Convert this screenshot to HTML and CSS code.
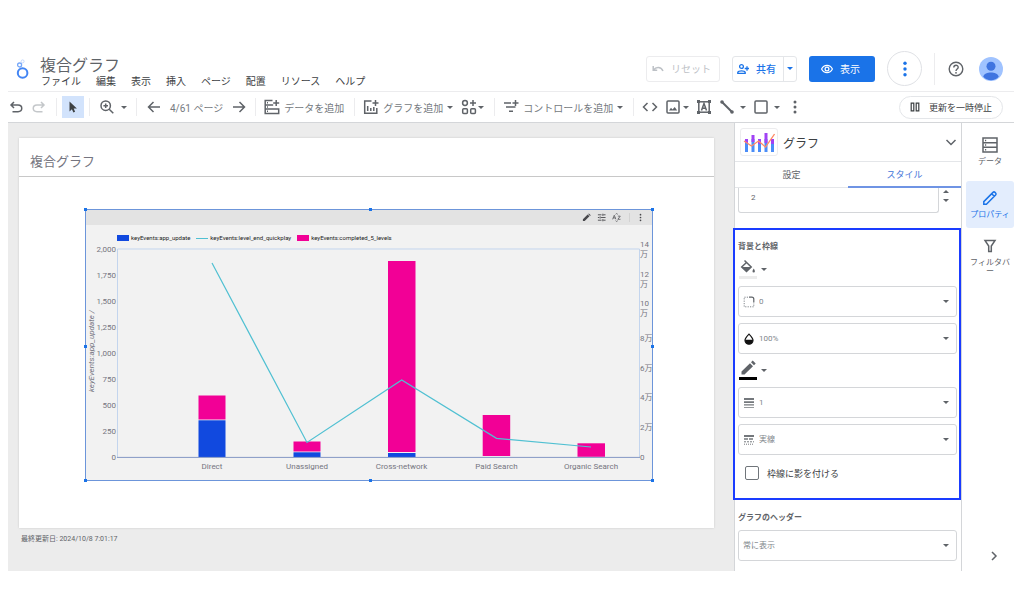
FILE: index.html
```html
<!DOCTYPE html>
<html lang="ja">
<head>
<meta charset="utf-8">
<title>複合グラフ</title>
<link rel="stylesheet" href="styles.css">
</head>
<body>
<svg class="defs" aria-hidden="true">
  <symbol id="caret" viewBox="0 0 6 3"><path d="M0 0h6L3 3z" fill="currentColor"/></symbol>
  <symbol id="dots" viewBox="0 0 16 16"><g fill="currentColor"><circle cx="8" cy="3" r="1.5"/><circle cx="8" cy="8" r="1.5"/><circle cx="8" cy="13" r="1.5"/></g></symbol>
</svg>

<header class="header">
  <svg class="logo" viewBox="0 0 14 20" aria-hidden="true"><g fill="none" stroke="#4285f4"><circle cx="7.6" cy="14" r="4.8" stroke-width="2"/><circle cx="4.6" cy="6" r="2" stroke-width="1.3" stroke="#76a7f8"/><circle cx="7.6" cy="2.4" r="1.5" stroke-width=".9" stroke="#bcd3fb"/></g></svg>
  <div class="heading">
    <h1 class="doc-title">複合グラフ</h1>
    <nav class="menu">
      <button>ファイル</button><button>編集</button><button>表示</button><button>挿入</button><button>ページ</button><button>配置</button><button>リソース</button><button>ヘルプ</button>
    </nav>
  </div>
  <div class="actions">
    <button class="btn btn-reset" disabled>
      <svg class="icon-s" viewBox="0 0 12 12"><path d="M1.2 3v4.200h4M1.500 7C4 3.700 8.800 3.500 11 8" fill="none" stroke="currentColor" stroke-width="1.5"/></svg>リセット
    </button>
    <div class="split">
      <button class="btn-share">
        <svg class="icon-s" viewBox="0 0 12 12"><g fill="none" stroke="currentColor" stroke-width="1.3"><circle cx="4.500" cy="3.500" r="1.900"/><path d="M.8 10.300V9.200C1.500 7.500 7.500 7.500 8.200 9.200v1.100zM10 3.200v4.600M7.700 5.500h4.300"/></g></svg>共有
      </button>
      <button class="btn-more" aria-label="共有メニュー"><svg class="caret"><use href="#caret"/></svg></button>
    </div>
    <button class="btn btn-view">
      <svg class="icon-s" viewBox="0 0 12 12"><g fill="none" stroke="currentColor" stroke-width="1.200"><path d="M.6 6C3 1.200 9 1.200 11.400 6 9 10.800 3 10.800.6 6z"/><circle cx="6" cy="6" r="1.900"/></g></svg>表示
    </button>
    <button class="round" aria-label="その他"><svg class="icon" viewBox="1 1 14 14"><use href="#dots" width="16" height="16"/></svg></button>
    <div class="account">
      <button class="plain" aria-label="ヘルプ"><svg class="icon" viewBox="0 0 16 16"><circle cx="8" cy="8" r="6.800" fill="none" stroke="currentColor" stroke-width="1.400"/><path d="M5.800 6.500c0-3 4.400-2.900 4.400-.2C10.200 8 8 8 8 9.900" fill="none" stroke="currentColor" stroke-width="1.400"/><circle cx="8" cy="11.800" r=".9" fill="currentColor"/></svg></button>
      <button class="plain" aria-label="アカウント"><svg class="avatar" viewBox="0 0 24 24"><circle cx="12" cy="12" r="12" fill="#a0c3ff"/><circle cx="12" cy="9.300" r="4.500" fill="#3f74e0"/><path d="M4.200 19.500c1.500-5.500 14-5.500 15.600 0-3.500 5-12 5-15.600 0z" fill="#3f74e0"/></svg></button>
    </div>
  </div>
</header>

<div class="toolbar" role="toolbar">
  <div class="group history">
    <button class="plain" aria-label="元に戻す"><svg class="icon" viewBox="0 0 16 16"><path d="M6 3 3 6l3 3M3.300 6H10c5 0 5 6.700 0 6.700H4.500" class="stroke"/></svg></button>
    <button class="plain faint" aria-label="やり直し"><svg class="icon" viewBox="0 0 16 16"><path d="m10 3 3 3-3 3M12.700 6H6C1 6 1 12.700 6 12.700h5.500" class="stroke"/></svg></button>
  </div>
  <div class="group pointer">
    <button class="plain selected" aria-label="選択"><svg class="icon" viewBox="0 0 16 16"><path d="M4.500 2.500v10l2.400-2.200 1.500 3.200 1.700-.8-1.400-3.100h3.200z" fill="currentColor"/></svg></button>
  </div>
  <div class="group zoom">
    <button class="plain" aria-label="ズーム"><svg class="icon" viewBox="0 0 16 16"><path d="M10.200 10.200 14.300 14.300M6.700 4.400v4.600M4.400 6.700H9" class="stroke"/><circle cx="6.700" cy="6.700" r="4.700" class="stroke"/></svg></button>
    <svg class="caret"><use href="#caret"/></svg>
  </div>
  <div class="group pager">
    <button class="plain" aria-label="前のページ"><svg class="icon" viewBox="0 0 16 16"><path d="M7.500 3 2.500 8l5 5M3 8h11" class="stroke"/></svg></button>
    <span class="tool-text">4/61 ページ</span>
    <button class="plain" aria-label="次のページ"><svg class="icon" viewBox="0 0 16 16"><path d="m8.500 3 5 5-5 5M13 8H2" class="stroke"/></svg></button>
  </div>
  <div class="group">
    <button class="tool"><svg class="icon" viewBox="0 0 16 16"><path d="M8.500 1.500H1.200v13h13.500V10H1.200M1.200 6h8M12.200 1v6M9.200 4h6M1.200 10v4.500" class="stroke"/><path d="M3 3.700h1M3 8h1M3 12.300h1" class="stroke"/></svg><span class="tool-text">データを追加</span></button>
  </div>
  <div class="group">
    <button class="tool"><svg class="icon" viewBox="0 0 16 16"><path d="M8.500 2H1.700v12.300h12.100V9M12.500 1v6M9.500 4h6M4.700 7v5M7.800 9v3M10.800 8v4" class="stroke"/></svg><span class="tool-text">グラフを追加</span><svg class="caret"><use href="#caret"/></svg></button>
    <button class="tool blocks" aria-label="コミュニティ ビジュアリゼーション"><svg class="icon" viewBox="0 0 16 16"><path d="M12 1v6M9 4h6" class="stroke"/><circle cx="4" cy="4" r="2.400" class="stroke"/><rect x="1.700" y="9.700" width="4.700" height="4.700" rx="1" class="stroke"/><rect x="9.700" y="9.700" width="4.700" height="4.700" rx="1" class="stroke"/></svg><svg class="caret"><use href="#caret"/></svg></button>
  </div>
  <div class="group">
    <button class="tool"><svg class="icon" viewBox="0 0 16 16"><path d="M1 4h7M3 8h9.500M6 12.300h4M12.500 1v6M9.500 4h6" class="stroke"/></svg><span class="tool-text">コントロールを追加</span><svg class="caret"><use href="#caret"/></svg></button>
  </div>
  <div class="group insert">
    <button class="plain" aria-label="URL の埋め込み"><svg class="icon" viewBox="0 0 16 16"><path d="M5.500 4 1.500 8l4 4M10.500 4l4 4-4 4" class="stroke"/></svg></button>
    <button class="tool" aria-label="画像"><svg class="icon" viewBox="0 0 16 16"><rect x="2" y="2" width="12" height="12" rx="1" class="stroke"/><path d="m4 11.500 2-2.700 1.500 1.700L9.700 8l2.500 3.500z" fill="currentColor"/></svg><svg class="caret"><use href="#caret"/></svg></button>
    <button class="plain" aria-label="テキスト"><svg class="icon" viewBox="0 0 16 16"><rect x="2.800" y="2.800" width="10.400" height="10.400" class="stroke"/><path d="m5.500 11.500 2.500-7 2.500 7M6.300 9.300h3.400" class="stroke"/><path d="M1 1h3v3H1zM12 1h3v3h-3zM1 12h3v3H1zM12 12h3v3h-3z" fill="currentColor"/></svg></button>
    <button class="tool wide" aria-label="線"><svg class="icon" viewBox="0 0 16 16"><path d="m3 3 10 10" stroke="currentColor" stroke-width="2"/><circle cx="3" cy="3" r="1.800" fill="currentColor"/><circle cx="13" cy="13" r="1.800" fill="currentColor"/></svg><svg class="caret"><use href="#caret"/></svg></button>
    <button class="tool wide" aria-label="図形"><svg class="icon" viewBox="0 0 16 16"><rect x="2" y="2" width="12" height="12" rx="1" class="stroke"/></svg><svg class="caret"><use href="#caret"/></svg></button>
    <button class="plain" aria-label="その他"><svg class="icon" viewBox="0 0 16 16"><use href="#dots"/></svg></button>
  </div>
  <button class="pause"><svg class="icon-s" viewBox="0 0 12 12"><path d="M2.200 2.200h2.600v7.600H2.200zM7.200 2.200h2.600v7.600H7.200z" fill="none" stroke="currentColor" stroke-width="1.200"/></svg>更新を一時停止</button>
</div>

<main class="workspace">
  <section class="canvas">
    <article class="page">
      <h2 class="page-title">複合グラフ</h2>
      <div class="page-body">
        <div class="chart">
          <i class="handle tl"></i><i class="handle tc"></i><i class="handle tr"></i><i class="handle ml"></i><i class="handle mr"></i><i class="handle bl"></i><i class="handle bc"></i><i class="handle br"></i>
          <div class="chart-bar">
            <button class="plain" aria-label="編集"><svg class="icon-xs" viewBox="0 0 10 10"><path d="M1 9V7l5.300-5.300 2 2L3 9zM6.900 1.200l.8-.7 2 2-.8.700z" fill="currentColor"/></svg></button>
            <button class="plain" aria-label="調整"><svg class="icon-xs" viewBox="0 0 10 10"><path d="M1 2h4M7 2h2.500M6.500.8v2.400M1 5h1.500M4.500 5h5M3.500 3.800v2.400M1 8h4M7 8h2.500M6.500 6.800v2.400" stroke="currentColor" fill="none"/></svg></button>
            <button class="plain" aria-label="並べ替え"><svg class="icon-xs" viewBox="0 0 10 10"><path d="m.7 7 1.800-4.500L4.300 7M1.300 5.500h2.400M6.500 3.500h2.700L6.500 7h2.900M4 1.500 5.200.5l1.200 1M4 8.500l1.200 1 1.200-1" stroke="currentColor" stroke-width=".8" fill="none"/></svg></button>
            <button class="plain more" aria-label="その他"><svg class="icon-xs" viewBox="0 0 16 16"><use href="#dots"/></svg></button>
          </div>
          <ul class="legend">
            <li><i class="key key-blue"></i>keyEvents:app_update</li>
            <li><i class="key key-line"></i>keyEvents:level_end_quickplay</li>
            <li><i class="key key-pink"></i>keyEvents:completed_5_levels</li>
          </ul>
          <svg class="plot" viewBox="86 237 566 243" role="img" aria-label="複合グラフ">
            <path d="M117.500 457V249H639.500V457" fill="none" stroke="#c3d5ee"/>
            <g fill="#f20096">
              <rect x="198.500" y="395.500" width="27" height="24"/><rect x="293.500" y="441.500" width="27" height="10"/><rect x="388" y="261" width="27.500" height="191"/><rect x="482.700" y="415" width="27.500" height="41"/><rect x="577.500" y="443.300" width="27.500" height="13.500"/>
            </g>
            <g fill="#1149df">
              <rect x="198.500" y="420.300" width="27" height="36.700"/><rect x="293.500" y="452.300" width="27" height="4.700"/><rect x="388" y="453" width="27.500" height="4"/>
            </g>
            <path d="M117 457.400H640" stroke="#8498c4"/>
            <path d="m212 263 95 179.500 94.700-62.500 94.800 58.300 94.500 8.700" fill="none" stroke="#50c0d2" stroke-width="1.200"/>
            <g class="axis" text-anchor="end">
              <text x="116" y="252">2,000</text><text x="116" y="278">1,750</text><text x="116" y="304">1,500</text><text x="116" y="330">1,250</text><text x="116" y="356">1,000</text><text x="116" y="382">750</text><text x="116" y="408">500</text><text x="116" y="434">250</text><text x="116" y="460">0</text>
            </g>
            <g class="axis">
              <text x="640" y="247">14</text><text x="640" y="257">万</text><text x="640" y="277">12</text><text x="640" y="287">万</text><text x="640" y="306">10</text><text x="640" y="316">万</text><text x="640" y="341">8万</text><text x="640" y="371">6万</text><text x="640" y="400">4万</text><text x="640" y="430">2万</text><text x="640" y="460">0</text>
            </g>
            <g class="axis" text-anchor="middle">
              <text x="212" y="469">Direct</text><text x="307" y="469">Unassigned</text><text x="401.500" y="469">Cross-network</text><text x="496.500" y="469">Paid Search</text><text x="591" y="469">Organic Search</text>
            </g>
            <text class="axis axis-title" transform="translate(94 392) rotate(-90)">keyEvents:app_update /</text>
          </svg>
        </div>
      </div>
    </article>
    <p class="updated">最終更新日: 2024/10/8 7:01:17</p>
  </section>

  <aside class="panel">
    <div class="panel-head">
      <span class="tile"><svg viewBox="0 0 32 22"><g fill="#4a8df8"><path d="M2 11h3v10H2zM8.500 8h3v13h-3zM15 12h3v9h-3zM21.500 8h3v13h-3zM28 10h3v11h-3z"/></g><g fill="#a142f4"><path d="M2 8h3v4H2zM8.500 4h3v7h-3zM15 8h3v5h-3zM21.500 2h3v10h-3zM28 8h3v5h-3z"/></g><path d="m1 10 7.500 5 7-5 7 6L31.500 3" fill="none" stroke="#ff8a65" stroke-width="1.300"/></svg></span>
      <h2>グラフ</h2>
      <button class="plain" aria-label="閉じる"><svg class="icon-s" viewBox="0 0 12 12"><path d="m1.500 4 4.500 4.500L10.500 4" class="stroke"/></svg></button>
    </div>
    <div class="tabs" role="tablist">
      <button role="tab">設定</button><button role="tab" class="active" aria-selected="true">スタイル</button>
    </div>
    <div class="stepper">
      <input type="text" value="2" aria-label="桁数">
      <span class="spin"><button class="plain" aria-label="増やす"><svg class="caret up"><use href="#caret"/></svg></button><button class="plain" aria-label="減らす"><svg class="caret"><use href="#caret"/></svg></button></span>
    </div>
    <section class="highlight">
      <h3>背景と枠線</h3>
      <button class="color" aria-label="背景色"><span class="ink ink-fill"><svg class="icon" viewBox="0 0 16 16"><path d="M4.500 1.500 11.200 8 6.500 12.500 1.700 8 6.500 3.500" fill="none" stroke="currentColor" stroke-width="1.500"/><path d="M2 8h9l-4.500 4.500z" fill="currentColor"/><path d="M13.700 9.500c1.500 2 1.700 4 0 4s-1.500-2 0-4z" fill="currentColor"/></svg></span><svg class="caret"><use href="#caret"/></svg></button>
      <label class="select"><svg class="icon-s" viewBox="0 0 12 12"><path d="M6 1.200h2.800q2 0 2 2V6" fill="none" stroke="#5f6368" stroke-width="1.200"/><path d="M5 1.200H1.200v9.600h9.600V6" fill="none" stroke="#80868b" stroke-dasharray="1.200 1.200"/></svg><select aria-label="枠線の角丸"><option>0</option></select><svg class="caret"><use href="#caret"/></svg></label>
      <label class="select"><svg class="icon-s" viewBox="0 0 12 12"><path d="M6 1.200C3.500 3.800 2 5.500 2 7.200a4 4 0 0 0 8 0C10 5.500 8.500 3.800 6 1.200z" fill="none" stroke="#111" stroke-width="1.200"/><path d="M2 6.700h8c0 6-8 6-8 0z" fill="#111"/></svg><select aria-label="不透明度"><option>100%</option></select><svg class="caret"><use href="#caret"/></svg></label>
      <button class="color" aria-label="枠線の色"><span class="ink ink-line"><svg class="icon" viewBox="0 0 16 16"><path d="M1.500 14.500v-3L10 3.200l3 3-8.500 8.300zM11 2.200l1.700-1.700 3 3L14 5.200z" fill="currentColor"/></svg></span><svg class="caret"><use href="#caret"/></svg></button>
      <label class="select"><svg class="icon-s" viewBox="0 0 12 12"><path d="M1 1h10v2H1zM1 4.300h10v1.700H1zM1 7.300h10v1.200H1zM1 10h10v.7H1z" fill="#74787c"/></svg><select aria-label="枠線の太さ"><option>1</option></select><svg class="caret"><use href="#caret"/></svg></label>
      <label class="select"><svg class="icon-s" viewBox="0 0 12 12"><g stroke="#74787c"><path d="M1 2h10" stroke-width="2"/><path d="M1 5h10" stroke-width="1.500" stroke-dasharray="4 1"/><path d="M1 7.800h10" stroke-dasharray="2 1"/><path d="M1 10.200h10" stroke-dasharray="1 1"/></g></svg><select aria-label="枠線のスタイル"><option>実線</option></select><svg class="caret"><use href="#caret"/></svg></label>
      <label class="check"><input type="checkbox">枠線に影を付ける</label>
    </section>
    <section class="header-options">
      <h3>グラフのヘッダー</h3>
      <label class="select"><select aria-label="グラフのヘッダー"><option>常に表示</option></select><svg class="caret"><use href="#caret"/></svg></label>
    </section>
  </aside>

  <nav class="rail">
    <button class="rail-item"><svg class="icon" viewBox="0 0 16 16"><path d="M1 1h14v14H1zM1 5.700h14M1 10.300h14M3 3.400h1.200M3 8h1.200M3 12.700h1.200" class="stroke"/></svg>データ</button>
    <button class="rail-item current"><svg class="icon" viewBox="0 0 16 16"><path d="M1.800 14.200v-2.600L11 2.400q1-1 2 0l.6.6q1 1 0 2L4.400 14.200zM9.700 3.700l2.600 2.600" class="stroke"/></svg>プロパティ</button>
    <button class="rail-item"><svg class="icon" viewBox="0 0 16 16"><path d="M3 2.500h10L9.300 8v5.500H6.700V8z" class="stroke"/></svg><span>フィルタバー</span></button>
    <button class="plain expand" aria-label="折りたたむ"><svg class="icon-s" viewBox="0 0 12 12"><path d="m4 2 4 4-4 4" class="stroke"/></svg></button>
  </nav>
</main>
</body>
</html>
```
FILE: styles.css
```css
* { box-sizing: border-box; }

body {
  margin: 0;
  min-height: 100vh;
  padding: 46px 10px 43px 8px;
  display: flex;
  flex-direction: column;
  background: #fff;
  color: #5f6368;
  font-family: Roboto, "Noto Sans CJK JP", sans-serif;
  font-size: 10px;
}

h1, h2, h3, p, ul { margin: 0; padding: 0; font-weight: 400; }

button, input, select {
  font: inherit;
  color: inherit;
  border: 0;
  background: none;
  padding: 0;
  margin: 0;
  white-space: nowrap;
}

svg { display: block; flex: none; }
.defs { position: absolute; width: 0; height: 0; }
.stroke { fill: none; stroke: currentColor; stroke-width: 1.5; }
.icon { width: 16px; height: 16px; }
.icon-s { width: 12px; height: 12px; }
.icon-xs { width: 9px; height: 9px; }
.caret { width: 6px; height: 3px; }
.up { transform: rotate(180deg); }
.plain { display: flex; align-items: center; justify-content: center; }
.faint { color: #c4c7ca; }

/* Header */
.header {
  height: 46px;
  display: flex;
  align-items: center;
  border-bottom: 1px solid #ececee;
}
.logo { width: 14px; height: 20px; margin: 0 11px 0 7px; }
.heading { padding-top: 9px; }
.doc-title { font-size: 16px; line-height: 18px; }
.menu { display: flex; gap: 15px; padding-left: 1px; line-height: 14px; color: #3c4043; }
.actions { margin-left: auto; display: flex; align-items: center; gap: 12px; }
.btn {
  height: 26px;
  display: flex;
  align-items: center;
  border-radius: 3px;
}
.btn-reset { gap: 7px; padding: 0 8px 0 5px; color: #bdc1c6; border: 1px solid #ececee; }
.split {
  height: 26px;
  display: flex;
  border: 1px solid #e4e6e9;
  border-radius: 3px;
  color: #1a73e8;
  font-weight: 500;
}
.btn-share { display: flex; align-items: center; gap: 7px; padding: 0 7px 0 4px; border-right: 1px solid #e4e6e9; }
.btn-more { padding: 0 3px; }
.btn-view { gap: 7px; padding: 0 15px 0 12px; background: #1a73e8; color: #fff; }
.round {
  width: 35px;
  height: 35px;
  display: flex;
  align-items: center;
  justify-content: center;
  border: 1px solid #dfe1e5;
  border-radius: 50%;
  color: #1a73e8;
}
.account {
  height: 32px;
  display: flex;
  align-items: center;
  gap: 15px;
  padding: 0 11px 0 13px;
  border-left: 1px solid #ececee;
}
.avatar { width: 24px; height: 24px; }

/* Toolbar */
.toolbar {
  height: 31px;
  display: flex;
  align-items: center;
  border-bottom: 1px solid #d4d6d9;
}
.group {
  height: 18px;
  display: flex;
  align-items: center;
  padding: 0 10px 0 8px;
  border-right: 1px solid #ececee;
}
.history { gap: 7px; padding: 0 9px 0 0; }
.pointer { padding: 0 5px; }
.selected { width: 22px; height: 22px; background: #d2e3fc; color: #3c4043; }
.zoom { gap: 6px; padding: 0 9px 0 9px; }
.pager { gap: 8px; padding: 0 8px 0 9px; }
.tool { display: flex; align-items: center; gap: 4px; }
.tool-text { color: #757a80; }
.blocks { gap: 1px; margin-left: 8px; }
.insert { gap: 7px; border-right: 0; padding-right: 0; }
.insert .tool { gap: 2px; }
.insert .wide { gap: 5px; }
.pause {
  height: 23px;
  margin: 0 11px 0 auto;
  display: flex;
  align-items: center;
  gap: 8px;
  padding: 0 10px 0 9px;
  border: 1px solid #e4e6e9;
  border-radius: 12px;
  font-size: 9px;
  color: #3c4043;
}

/* Workspace */
.workspace { flex: 1; display: flex; }
.canvas { flex: 1; min-width: 0; padding: 15px 20px 0 11px; background: #ececec; }
.page { background: #fff; box-shadow: 0 0 2px #c8c8c8; }
.page-title {
  padding: 14px 11px 4px;
  font-size: 13px;
  line-height: 20px;
  color: #757580;
  border-bottom: 1px solid #c8c8c8;
}
.page-body { padding: 32px 61px 47px 66px; }
.updated { padding: 5px 2px; font-size: 7px; line-height: 12px; }

/* Chart */
.chart {
  position: relative;
  border: 1px solid #6c95da;
  background: #f2f2f2;
}
.handle { position: absolute; width: 3px; height: 3px; background: #1a73e8; }
.tl, .tc, .tr { top: -2px; }
.bl, .bc, .br { bottom: -2px; }
.ml, .mr { top: 50%; }
.tl, .ml, .bl { left: -2px; }
.tr, .mr, .br { right: -2px; }
.tc, .bc { left: 50%; }
.chart-bar {
  height: 15px;
  display: flex;
  align-items: center;
  justify-content: flex-end;
  gap: 6px;
  padding-right: 7px;
  background: #e3e3e3;
  color: #48484c;
}
.more { margin-left: 2px; padding-left: 6px; border-left: 1px solid #d2d2d2; }
.legend {
  display: flex;
  gap: 6px;
  margin-bottom: -5px;
  padding: 9px 31px 0;
  list-style: none;
  font-size: 6px;
  line-height: 8px;
  color: #222;
}
.legend li { display: flex; align-items: center; gap: 2px; }
.key { width: 12px; height: 6px; }
.key-blue { background: #1149df; }
.key-pink { background: #f20096; }
.key-line { height: 1px; background: #50c0d2; }
.plot { width: 100%; height: auto; }
.axis { font-size: 8px; fill: #757580; }
.axis-title { font-style: italic; }

/* Property panel */
.panel { width: 228px; border-left: 1px solid #d4d6d9; border-right: 1px solid #d4d6d9; }
.panel-head { height: 39px; display: flex; align-items: center; gap: 5px; padding: 0 4px 0 5px; border-bottom: 1px solid #e4e6e9; }
.panel-head h2 { flex: 1; font-size: 12px; color: #3c4043; }
.tile { border: 1px solid #ececee; border-radius: 3px; padding: 2px; }
.tile svg { width: 32px; height: 22px; }
.tabs { height: 26px; display: grid; grid-template-columns: 1fr 1fr; font-size: 9px; }
.tabs button { border-bottom: 1px solid #e4e6e9; }
.tabs .active { color: #3f74d8; border-bottom: 2px solid #6f94e4; }
.stepper { display: flex; padding: 0 12px 15px 3px; font-size: 8px; }
.stepper input {
  flex: 1;
  min-width: 0;
  height: 25px;
  padding: 0 12px 5px;
  border: 1px solid #d4d6d9;
  border-top: 0;
  border-radius: 0 0 3px 3px;
}
.spin { display: flex; flex-direction: column; gap: 6px; padding: 2px 0 0 4px; }
.highlight {
  margin: 0 0 0 -2px;
  padding: 11px 2px 18px 3px;
  border: 2px solid #1a3cff;
}
h3 { font-size: 8px; line-height: 12px; font-weight: 700; }
.color { display: flex; align-items: center; gap: 4px; margin: 6px 0 7px 1px; }
.ink { padding: 0 1px 1px; border-bottom: 3px solid; }
.ink-fill { border-color: #ececec; }
.ink-line { border-color: #000; }
.select {
  height: 31px;
  display: flex;
  align-items: center;
  gap: 4px;
  padding: 0 7px 0 4px;
  border: 1px solid #d4d6d9;
  border-radius: 3px;
  font-size: 8px;
  color: #80868b;
}
.select + .select { margin-top: 6px; }
.select select { flex: 1; min-width: 0; appearance: none; }
.select .caret { color: #5f6368; }
.check { display: flex; align-items: center; gap: 8px; margin: 11px 0 0 7px; font-size: 9px; color: #3c4043; }
.check input {
  width: 14px;
  height: 14px;
  appearance: none;
  border: 1px solid #70757a;
  border-radius: 2px;
}
.header-options { padding: 12px 4px 0 3px; }
.header-options .select { margin-top: 6px; }

/* Right rail */
.rail { width: 52px; display: flex; flex-direction: column; align-items: stretch; padding: 0 0 9px 4px; }
.rail-item {
  min-height: 47px;
  margin-bottom: 1px;
  padding: 0 3px;
  display: flex;
  flex-direction: column;
  align-items: center;
  justify-content: center;
  gap: 4px;
  font-size: 8px;
  line-height: 9px;
  white-space: normal;
  border-radius: 3px;
}
.rail-item:first-child { min-height: 57px; }
.rail-item:nth-child(3) { min-height: 55px; }
.rail-item span { width: 40px; }
.current { background: #e3edfd; color: #1a73e8; }
.expand { margin-top: auto; padding-left: 8px; }
```
